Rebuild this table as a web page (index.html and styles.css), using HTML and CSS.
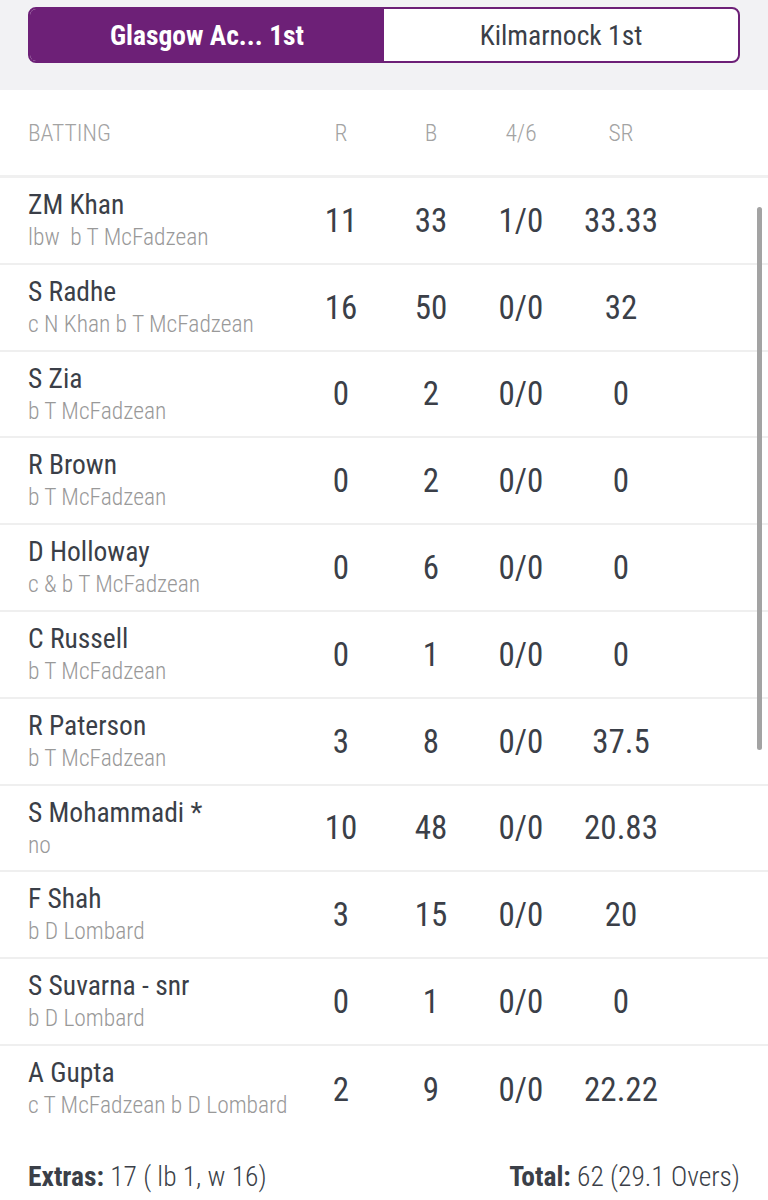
FILE: index.html
```html
<!DOCTYPE html>
<html>
<head>
<meta charset="utf-8">
<link rel="stylesheet" href="styles.css">
</head>
<body>
<div class="top">
  <div class="toggle">
    <div class="tab active">Glasgow Ac... 1st</div>
    <div class="tab">Kilmarnock 1st</div>
  </div>
</div>
<div class="card">
  <div class="row head">
    <div class="name">BATTING</div>
    <div class="num">R</div>
    <div class="num">B</div>
    <div class="num">4/6</div>
    <div class="num">SR</div>
  </div>
  <div class="rows">
    <div class="row"><div class="name"><div class="pl">ZM Khan</div><div class="how">lbw&nbsp; b T McFadzean</div></div><div class="num">11</div><div class="num">33</div><div class="num">1/0</div><div class="num">33.33</div></div>
    <div class="row"><div class="name"><div class="pl">S Radhe</div><div class="how">c N Khan b T McFadzean</div></div><div class="num">16</div><div class="num">50</div><div class="num">0/0</div><div class="num">32</div></div>
    <div class="row"><div class="name"><div class="pl">S Zia</div><div class="how">b T McFadzean</div></div><div class="num">0</div><div class="num">2</div><div class="num">0/0</div><div class="num">0</div></div>
    <div class="row"><div class="name"><div class="pl">R Brown</div><div class="how">b T McFadzean</div></div><div class="num">0</div><div class="num">2</div><div class="num">0/0</div><div class="num">0</div></div>
    <div class="row"><div class="name"><div class="pl">D Holloway</div><div class="how">c &amp; b T McFadzean</div></div><div class="num">0</div><div class="num">6</div><div class="num">0/0</div><div class="num">0</div></div>
    <div class="row"><div class="name"><div class="pl">C Russell</div><div class="how">b T McFadzean</div></div><div class="num">0</div><div class="num">1</div><div class="num">0/0</div><div class="num">0</div></div>
    <div class="row"><div class="name"><div class="pl">R Paterson</div><div class="how">b T McFadzean</div></div><div class="num">3</div><div class="num">8</div><div class="num">0/0</div><div class="num">37.5</div></div>
    <div class="row"><div class="name"><div class="pl">S Mohammadi *</div><div class="how">no</div></div><div class="num">10</div><div class="num">48</div><div class="num">0/0</div><div class="num">20.83</div></div>
    <div class="row"><div class="name"><div class="pl">F Shah</div><div class="how">b D Lombard</div></div><div class="num">3</div><div class="num">15</div><div class="num">0/0</div><div class="num">20</div></div>
    <div class="row"><div class="name"><div class="pl">S Suvarna - snr</div><div class="how">b D Lombard</div></div><div class="num">0</div><div class="num">1</div><div class="num">0/0</div><div class="num">0</div></div>
    <div class="row last"><div class="name"><div class="pl">A Gupta</div><div class="how">c T McFadzean b D Lombard</div></div><div class="num">2</div><div class="num">9</div><div class="num">0/0</div><div class="num">22.22</div></div>
  </div>
  <div class="foot">
    <div><b>Extras:</b> 17 ( lb 1, w 16)</div>
    <div><b>Total:</b> 62 (29.1 Overs)</div>
  </div>
  <div class="scrollbar"></div>
</div>
</body>
</html>
```
FILE: styles.css
```css
html, body {
  margin: 0;
  padding: 0;
  background: #ffffff;
}
body {
  font-family: "Roboto Condensed", "Liberation Sans Narrow", "DejaVu Sans Condensed", Roboto, sans-serif;
  font-stretch: condensed;
  color: #3b3f48;
  width: 768px;
  height: 1200px;
  overflow: hidden;
  position: relative;
}
.top {
  background: #f2f2f4;
  padding: 7px 28px 27px 28px;
}
.toggle {
  display: flex;
  height: 56px;
  box-sizing: border-box;
  border: 2px solid #6d2077;
  border-radius: 8px;
  overflow: hidden;
  background: #ffffff;
}
.tab {
  flex: 1;
  display: flex;
  align-items: center;
  justify-content: center;
  font-size: 27.5px;
  color: #3b3f48;
}
.tab.active {
  background: #6d2077;
  color: #ffffff;
  font-weight: bold;
}
.card {
  background: #ffffff;
}
.row {
  display: grid;
  grid-template-columns: 268px 90px 90px 90px 110px;
  padding-left: 28px;
  box-sizing: border-box;
  height: 86.8px;
  border-bottom: 2px solid #efefef;
  align-items: center;
}
.row.head {
  height: 88px;
  border-bottom: 3px solid #f0f0f0;
  color: #a3a3a3;
  font-size: 23.5px;
  font-weight: 300;
}
.row.head .num {
  font-size: 23.5px;
  color: #a3a3a3;
  font-weight: 300;
}
.row.last {
  border-bottom: none;
}
.name {
  align-self: stretch;
  display: flex;
  flex-direction: column;
  justify-content: center;
}
.row:not(.head) .name {
  justify-content: flex-start;
  padding-top: 10px;
}
.pl {
  font-size: 27.5px;
  line-height: 33px;
  color: #3b3f48;
}
.how {
  font-size: 23.5px;
  line-height: 32px;
  color: #999999;
  font-weight: 300;
}
.num {
  text-align: center;
  font-size: 33px;
  color: #3b3f48;
}
.foot {
  display: flex;
  justify-content: space-between;
  padding: 27px 28px 0 28px;
  font-size: 27.5px;
  line-height: 34px;
  color: #3b3f48;
  font-weight: 300;
}
.foot b {
  font-weight: bold;
}
.scrollbar {
  position: absolute;
  left: 757px;
  top: 207px;
  width: 5px;
  height: 543px;
  border-radius: 3px;
  background: #a3a3a3;
}
```
